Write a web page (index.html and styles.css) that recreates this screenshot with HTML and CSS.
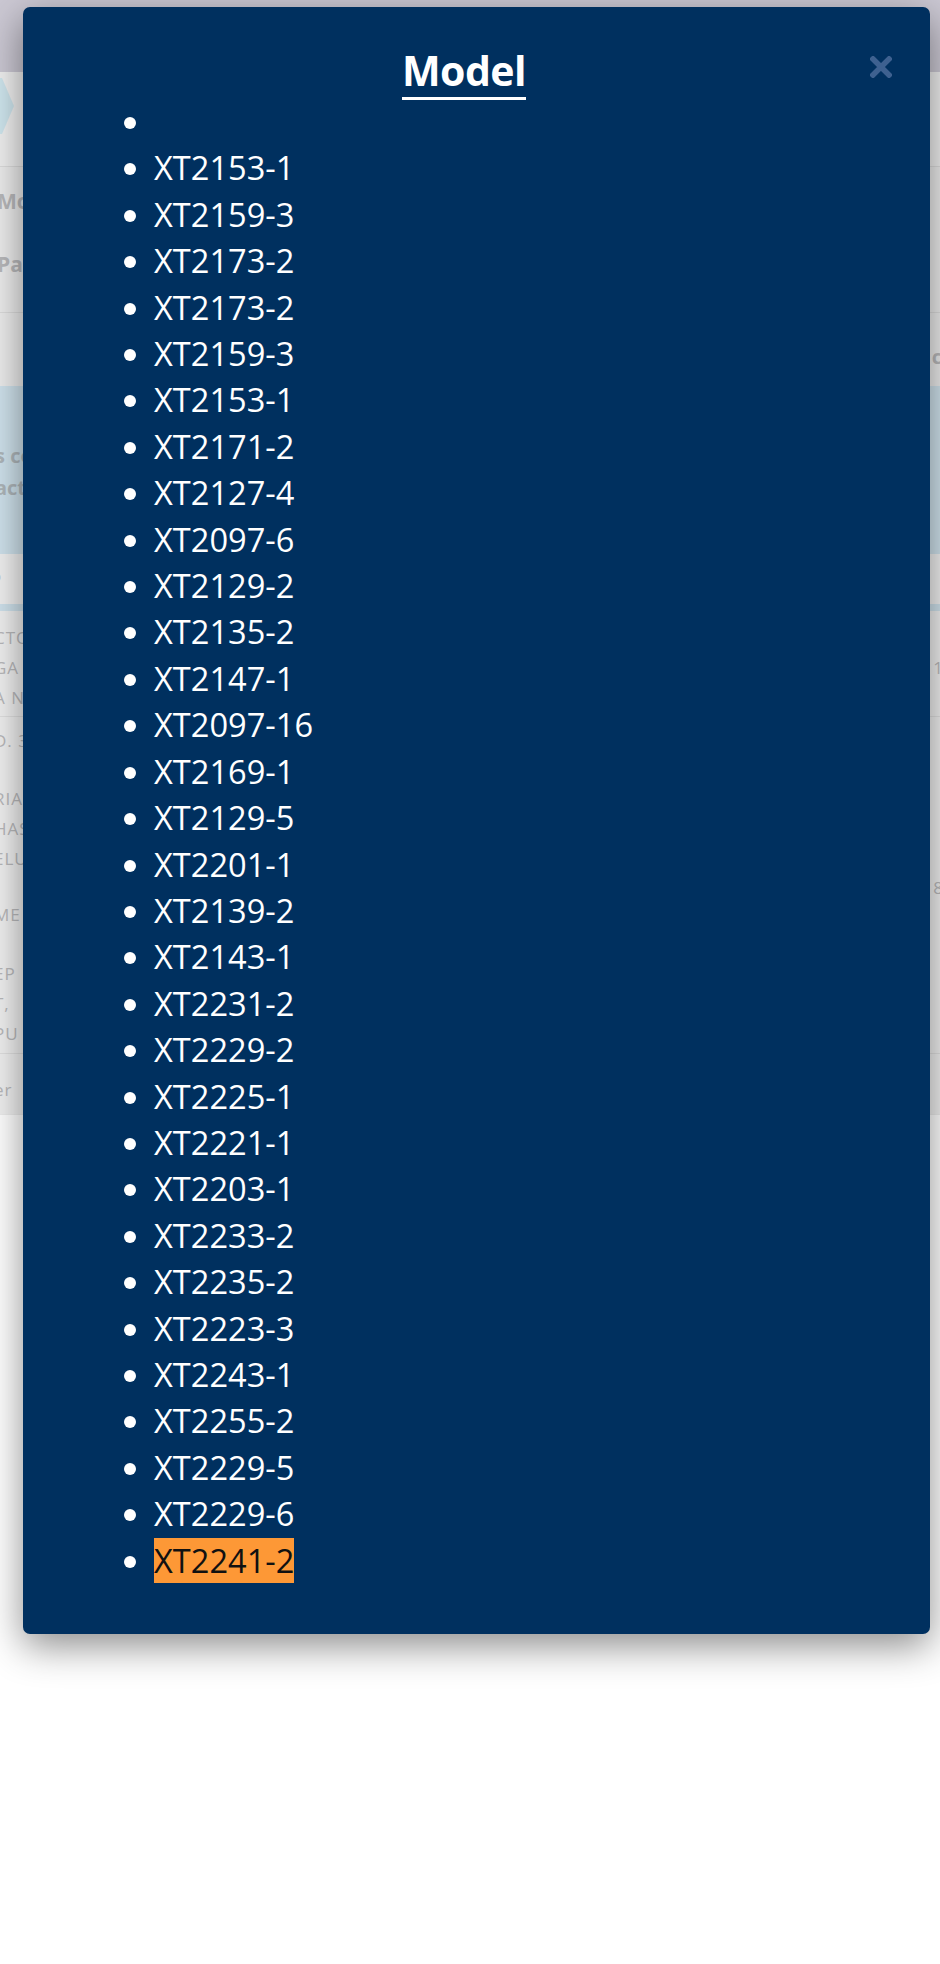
FILE: index.html
```html
<!DOCTYPE html>
<html lang="es">
<head>
<meta charset="utf-8">
<title>Model</title>
<link rel="stylesheet" href="styles.css">
</head>
<body>
<div class="page">
  <div class="topbar"></div>
  <div class="crumbs">
    <svg class="chev" width="16" height="56" viewBox="0 0 16 56"><path d="M-20 0 H2 L14 28 L2 56 H-20 Z" fill="#cfe6ee"/></svg>
  </div>
  <div class="titles">
    <div class="t1">Modelo</div>
    <div class="t2">Part number</div>
  </div>
  <div class="spacer"><span class="rt">c</span></div>
  <div class="notice">
    <div class="n1">s compatibles</div>
    <div class="n2">actualizados</div>
  </div>
  <div class="row1">o</div>
  <div class="blueline"></div>
  <div class="specs">
    <div class="grp g1"><div class="ln">CTOR</div><div class="ln">GA <span class="rv">1</span></div><div class="ln">A NFC</div></div>
    <div class="grp gd"><div class="ln">D. 3</div></div>
    <div class="grp g2"><div class="ln">RIA</div><div class="ln">HAS</div></div>
    <div class="pair">
      <div class="pl"><div class="ln">ELU</div><div class="ln me">ME</div></div>
      <span class="pv">8</span>
    </div>
    <div class="grp g4"><div class="ln">EP</div><div class="ln">T,</div><div class="ln">PU</div></div>
    <div class="grp last"><div class="ln low">er</div></div>
  </div>
</div>

<div class="modal">
  <div class="modal-head">
    <h2 class="modal-title">Model</h2>
    <span class="close" aria-label="Cerrar">
      <svg width="22" height="22" viewBox="0 0 22 22"><path d="M3 3 L19 19 M19 3 L3 19" stroke="#3e6190" stroke-width="5.5" stroke-linecap="square"/></svg>
    </span>
  </div>
  <ul class="models">
    <li></li>
    <li>XT2153-1</li>
    <li>XT2159-3</li>
    <li>XT2173-2</li>
    <li>XT2173-2</li>
    <li>XT2159-3</li>
    <li>XT2153-1</li>
    <li>XT2171-2</li>
    <li>XT2127-4</li>
    <li>XT2097-6</li>
    <li>XT2129-2</li>
    <li>XT2135-2</li>
    <li>XT2147-1</li>
    <li>XT2097-16</li>
    <li>XT2169-1</li>
    <li>XT2129-5</li>
    <li>XT2201-1</li>
    <li>XT2139-2</li>
    <li>XT2143-1</li>
    <li>XT2231-2</li>
    <li>XT2229-2</li>
    <li>XT2225-1</li>
    <li>XT2221-1</li>
    <li>XT2203-1</li>
    <li>XT2233-2</li>
    <li>XT2235-2</li>
    <li>XT2223-3</li>
    <li>XT2243-1</li>
    <li>XT2255-2</li>
    <li>XT2229-5</li>
    <li>XT2229-6</li>
    <li><span class="hit">XT2241-2</span></li>
  </ul>
</div>
</body>
</html>
```

FILE: styles.css
```css
html, body {
  margin: 0;
  padding: 0;
  background: #ffffff;
}
body {
  font-family: "Open Sans", "Liberation Sans", sans-serif;
  position: relative;
  min-height: 1964px;
}

/* background page (dimmed) */
.page {
  height: 1115px;
  background: #ececec;
  color: #b9b9bb;
  overflow: hidden;
}
.topbar {
  height: 72px;
  background: #cbc8d3;
}
.crumbs {
  height: 95px;
  border-bottom: 1px solid #dcdcdc;
  padding-top: 6px;
  box-sizing: border-box;
  background: #efefef;
}
.chev { display: block; }
.titles {
  height: 146px;
  box-sizing: border-box;
  border-bottom: 1px solid #dcdcdc;
  padding-top: 20px;
  font-weight: 700;
  font-size: 21px;
  margin-left: -3px;
}
.titles .t1 { line-height: 28px; }
.titles .t2 { line-height: 28px; margin-top: 35px; }
.spacer {
  height: 73px;
  position: relative;
}
.rt {
  position: absolute;
  right: -2px;
  top: 30px;
  font-size: 20px;
  font-weight: 700;
}
.notice {
  height: 168px;
  background: #cfe2ec;
  box-sizing: border-box;
  padding-top: 54px;
  font-weight: 700;
  font-size: 20px;
  line-height: 32px;
  margin-left: -5px;
  color: #aeb6ba;
}
.row1 {
  height: 50px;
  line-height: 44px;
  font-size: 17px;
  margin-left: -9px;
  background: #f0f0f0;
}
.blueline {
  height: 7px;
  background: #cfe2ec;
}
.specs {
  font-size: 17px;
  letter-spacing: 1px;
  background: #f0f0f0;
  height: 503px;
  margin-left: -6px;
}
.grp {
  padding: 0;
}
.ln {
  line-height: 30px;
  display: flex;
  justify-content: space-between;
}
.rv { margin-right: -4px; }
.g1 { padding: 12px 0 3px; border-bottom: 1px solid #e0e0e0; }
.gd { padding-top: 9px; }
.g2 { padding-top: 28px; }
.pair {
  display: flex;
  justify-content: space-between;
  align-items: center;
}
.pl .me { margin-top: 26px; }
.pv { margin-right: -4px; }
.g4 { padding: 29px 0 4px; border-bottom: 1px solid #e0e0e0; }
.last { padding-top: 21px; }

/* modal */
.modal {
  position: absolute;
  top: 7px;
  left: 23px;
  width: 907px;
  background: #00305f;
  border-radius: 7px;
  box-shadow: 0 12px 38px rgba(0, 0, 0, 0.45);
  padding-bottom: 50px;
}
.modal-head {
  height: 91px;
  box-sizing: border-box;
  padding: 40px 60px 0 35px;
  text-align: center;
}
.modal-title {
  display: inline-block;
  margin: 0;
  font-family: "Open Sans", "Liberation Sans", sans-serif;
  font-weight: 700;
  font-size: 41px;
  line-height: 46px;
  color: #ffffff;
  padding-bottom: 4px;
  border-bottom: 3px solid #ffffff;
  letter-spacing: -0.5px;
}
.close {
  position: absolute;
  top: 49px;
  right: 38px;
  width: 22px;
  height: 22px;
}
.close svg { display: block; }
.models {
  margin: 1px 0 0;
  padding: 0 0 0 131px;
  list-style: disc;
  color: #ffffff;
  font-size: 32.6px;
  line-height: 46.4px;
}
.hit {
  background: #fd9836;
  color: #111111;
}
```
